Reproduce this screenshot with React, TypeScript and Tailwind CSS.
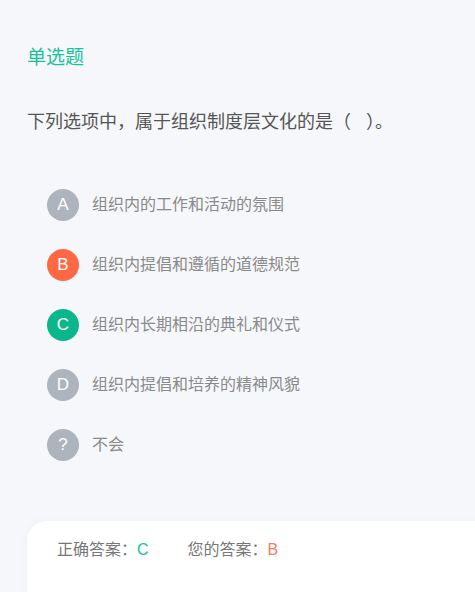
const options = [
  { key: 'A', text: '组织内的工作和活动的氛围', color: 'bg-[#adb4be]' },
  { key: 'B', text: '组织内提倡和遵循的道德规范', color: 'bg-[#ff6845]' },
  { key: 'C', text: '组织内长期相沿的典礼和仪式', color: 'bg-[#0cb68b]' },
  { key: 'D', text: '组织内提倡和培养的精神风貌', color: 'bg-[#adb4be]' },
  { key: '?', text: '不会', color: 'bg-[#adb4be]' },
];

export default function App() {
  return (
    <div className="h-[592px] overflow-hidden bg-[#f6f7fb] font-['Liberation_Sans','Noto_Sans_CJK_SC',sans-serif]">
      <div className="pl-[27px] pt-[46px]">
        <div className="text-[19px] leading-[24px] text-[#17c298]">单选题</div>
        <div className="mt-[40px] text-[18px] leading-[24px] text-[#555]">
          下列选项中，属于组织制度层文化的是（&nbsp;&nbsp;&nbsp;）。
        </div>
      </div>

      <div className="mt-[55px] flex flex-col gap-[28px] pl-[47px]">
        {options.map((o) => (
          <div key={o.key} className="flex items-center">
            <div
              className={`flex h-[32px] w-[32px] items-center justify-center rounded-full text-[17px] text-white ${o.color}`}
            >
              {o.key}
            </div>
            <span className="ml-[13px] text-[16px] text-[#8a8a8a]">{o.text}</span>
          </div>
        ))}
      </div>

      <div className="ml-[27px] mt-[60px] h-[120px] rounded-tl-[20px] bg-white pl-[30px] pt-[18px] shadow-[0_0_12px_rgba(0,0,0,0.03)]">
        <div className="flex text-[16px] leading-[22px] text-[#777]">
          <span>
            正确答案：<span className="text-[#17c298]">C</span>
          </span>
          <span className="ml-[39px]">
            您的答案：<span className="text-[#ff7a5c]">B</span>
          </span>
        </div>
      </div>
    </div>
  );
}
